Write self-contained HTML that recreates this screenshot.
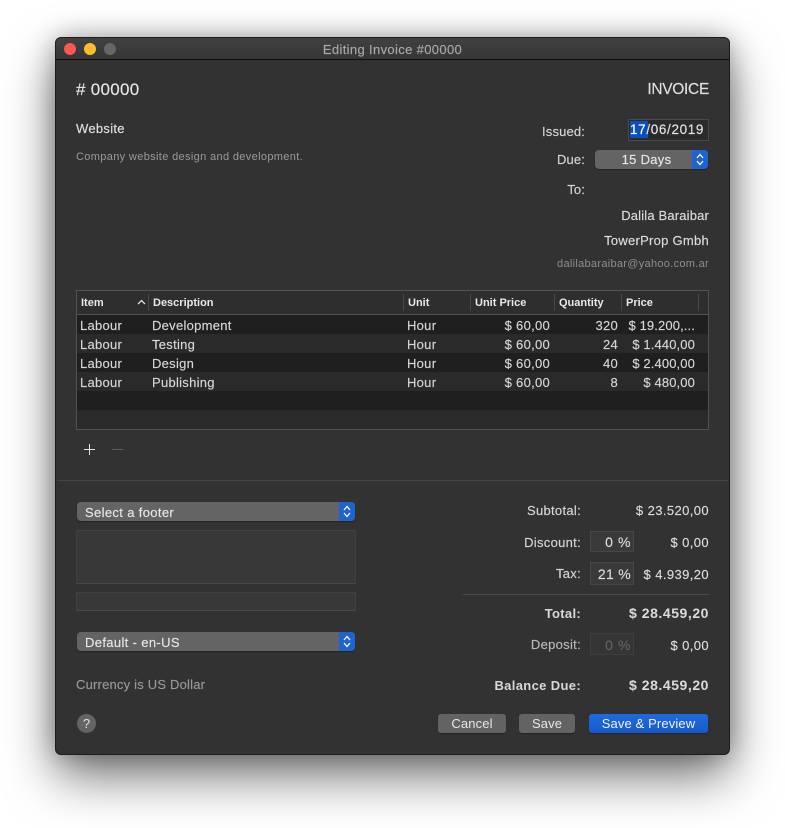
<!DOCTYPE html>
<html><head><meta charset="utf-8">
<style>
html,body{margin:0;padding:0;background:#fff;}
body{width:785px;height:828px;position:relative;overflow:hidden;font-family:"Liberation Sans",sans-serif;color:#dcdcdc;}
.win{position:absolute;left:56px;top:38px;width:673px;height:716px;box-sizing:border-box;background:#323232;border-radius:5px;
box-shadow:0 0 0 1px #1c1c1c,0 22px 50px rgba(0,0,0,.55),0 0 26px rgba(0,0,0,.3);}
.bar{position:absolute;left:56px;top:38px;width:673px;height:21px;background:linear-gradient(#414141,#363636);border-radius:5px 5px 0 0;border-bottom:1px solid #0e0e0e;}
.dot{position:absolute;width:12px;height:12px;border-radius:50%;top:43px;}
.t{position:absolute;white-space:nowrap;line-height:16px;font-size:13px;letter-spacing:.3px;-webkit-text-stroke:.15px;}
.r{text-align:right;}
.b{font-weight:bold;-webkit-text-stroke:0;}
.row{position:absolute;left:78px;width:630px;height:19px;}
.sep{position:absolute;width:1px;top:294px;height:17px;background:#484848;}
.h{position:absolute;top:295px;font-size:11px;font-weight:bold;line-height:16px;color:#e8e8e8;white-space:nowrap;}
.c{position:absolute;font-size:13px;line-height:19px;color:#d6d6d6;white-space:nowrap;letter-spacing:.28px;-webkit-text-stroke:.15px;}
.p{letter-spacing:.12px;}
.pop{position:absolute;height:19px;background:#646464;border-radius:4px;box-shadow:0 1px 1px rgba(0,0,0,.3);}
.arr{position:absolute;right:0;top:0;width:16px;height:19px;background:#1f62d0;border-radius:0 4px 4px 0;}
.arr svg{position:absolute;left:3px;top:3px;}
.field{position:absolute;box-sizing:border-box;background:#383838;border:1px solid #464646;}
.btn{position:absolute;top:714px;height:19px;border-radius:3px;background:#636363;font-size:13px;line-height:19px;text-align:center;color:#e6e6e6;box-shadow:0 1px 1px rgba(0,0,0,.3);letter-spacing:.12px;}
</style></head>
<body>
<div class="win"></div>
<div class="bar"></div>
<div class="dot" style="left:64px;background:#fc5753;"></div>
<div class="dot" style="left:84px;background:#fdbc2e;"></div>
<div class="dot" style="left:104px;background:#666;"></div>
<div class="t" style="left:56px;width:673px;text-align:center;top:42px;color:#a8a8a8;letter-spacing:.35px;">Editing Invoice #00000</div>

<div class="t" style="left:76px;top:81px;font-size:17px;line-height:18px;color:#e6e6e6;letter-spacing:.3px;">#&nbsp;00000</div>
<div class="t r" style="right:76px;top:81px;font-size:15.5px;line-height:18px;color:#e0e0e0;letter-spacing:-.3px;">INVOICE</div>
<div class="t" style="left:76px;top:121px;font-size:13px;color:#e0e0e0;letter-spacing:.3px;">Website</div>
<div class="t" style="left:76px;top:149px;font-size:11px;color:#9a9a9a;letter-spacing:.35px;-webkit-text-stroke:0;">Company website design and development.</div>

<div class="t r" style="right:200px;top:124px;color:#d6d6d6;letter-spacing:.15px;">Issued:</div>
<div style="position:absolute;left:628px;top:119px;width:81px;height:22px;box-sizing:border-box;background:#2b2b2b;border:1px solid #4a4a4a;"></div>
<div style="position:absolute;left:630px;top:121px;width:18px;height:17px;background:#0e4fc0;"></div>
<div class="t" style="left:630px;top:122px;color:#e2e2e2;font-size:13.5px;letter-spacing:.65px;"><span style="color:#fff">17</span>/06/2019</div>

<div class="t r" style="right:200px;top:152px;color:#d6d6d6;letter-spacing:.15px;">Due:</div>
<div class="pop" style="left:595px;top:150px;width:113px;">
  <div class="arr"><svg width="10" height="13" viewBox="0 0 10 13" fill="none" stroke="#fff" stroke-width="1.3"><path d="M2 5 5 1.5 8 5M2 8 5 11.5 8 8"/></svg></div>
</div>
<div class="t" style="left:595px;width:103px;text-align:center;top:152px;color:#e6e6e6;">15 Days</div>

<div class="t r" style="right:200px;top:182px;color:#d6d6d6;letter-spacing:.15px;">To:</div>
<div class="t r" style="right:76px;top:208px;color:#dcdcdc;letter-spacing:.17px;">Dalila Baraibar</div>
<div class="t r" style="right:76px;top:233px;color:#dcdcdc;letter-spacing:.27px;">TowerProp Gmbh</div>
<div class="t r" style="right:76px;top:256px;font-size:11px;color:#8e8e8e;letter-spacing:.3px;-webkit-text-stroke:0;">dalilabaraibar@yahoo.com.ar</div>

<!-- table -->
<div style="position:absolute;left:76px;top:290px;width:633px;height:140px;box-sizing:border-box;border:1px solid #525252;background:#2e2e2e;"></div>
<div style="position:absolute;left:77px;top:314px;width:631px;height:1px;background:#525252;"></div>
<div class="row" style="left:77px;width:631px;top:315px;background:#1f1f1f;"></div>
<div class="row" style="left:77px;width:631px;top:334px;background:#2a2a2a;"></div>
<div class="row" style="left:77px;width:631px;top:353px;background:#1f1f1f;"></div>
<div class="row" style="left:77px;width:631px;top:372px;background:#2a2a2a;"></div>
<div class="row" style="left:77px;width:631px;top:391px;background:#1f1f1f;"></div>
<div class="row" style="left:77px;width:631px;top:410px;background:#2a2a2a;"></div>

<div class="sep" style="left:148px"></div><div class="sep" style="left:403px"></div><div class="sep" style="left:470px"></div><div class="sep" style="left:554px"></div><div class="sep" style="left:621px"></div><div class="sep" style="left:698px"></div>
<div class="h" style="left:81px">Item</div>
<svg style="position:absolute;left:137px;top:299px" width="9" height="6" viewBox="0 0 9 6" fill="none" stroke="#e0e0e0" stroke-width="1.3"><path d="M1 5 4.5 1.5 8 5"/></svg>
<div class="h" style="left:153px">Description</div>
<div class="h" style="left:408px">Unit</div>
<div class="h" style="left:475px">Unit Price</div>
<div class="h" style="left:559px">Quantity</div>
<div class="h" style="left:626px">Price</div>

<div class="c" style="left:80px;top:316px">Labour</div><div class="c" style="left:152px;top:316px">Development</div><div class="c" style="left:407px;top:316px">Hour</div><div class="c r" style="right:235px;top:316px">$ 60,00</div><div class="c r" style="right:167px;top:316px">320</div><div class="c r p" style="right:90px;top:316px">$ 19.200,...</div>
<div class="c" style="left:80px;top:335px">Labour</div><div class="c" style="left:152px;top:335px">Testing</div><div class="c" style="left:407px;top:335px">Hour</div><div class="c r" style="right:235px;top:335px">$ 60,00</div><div class="c r" style="right:167px;top:335px">24</div><div class="c r p" style="right:90px;top:335px">$ 1.440,00</div>
<div class="c" style="left:80px;top:354px">Labour</div><div class="c" style="left:152px;top:354px">Design</div><div class="c" style="left:407px;top:354px">Hour</div><div class="c r" style="right:235px;top:354px">$ 60,00</div><div class="c r" style="right:167px;top:354px">40</div><div class="c r p" style="right:90px;top:354px">$ 2.400,00</div>
<div class="c" style="left:80px;top:373px">Labour</div><div class="c" style="left:152px;top:373px">Publishing</div><div class="c" style="left:407px;top:373px">Hour</div><div class="c r" style="right:235px;top:373px">$ 60,00</div><div class="c r" style="right:167px;top:373px">8</div><div class="c r p" style="right:90px;top:373px">$ 480,00</div>

<svg style="position:absolute;left:84px;top:444px" width="40" height="12" viewBox="0 0 40 12" fill="none"><path d="M5.5 0V11M0 5.5H11" stroke="#e4e4e4" stroke-width="1"/><path d="M28 5.5H39" stroke="#5c5c5c" stroke-width="1"/></svg>
<div style="position:absolute;left:57px;top:480px;width:671px;height:1px;background:#444;"></div>

<!-- left bottom -->
<div class="pop" style="left:77px;top:502px;width:278px;"><div class="arr"><svg width="10" height="13" viewBox="0 0 10 13" fill="none" stroke="#fff" stroke-width="1.3"><path d="M2 5 5 1.5 8 5M2 8 5 11.5 8 8"/></svg></div></div>
<div class="t" style="left:85px;top:505px;color:#e6e6e6;letter-spacing:.35px;">Select a footer</div>
<div class="field" style="left:76px;top:530px;width:280px;height:54px;border-color:#404040;border-bottom-color:#484848;"></div>
<div class="field" style="left:76px;top:592px;width:280px;height:19px;border-color:#404040;border-bottom-color:#484848;"></div>
<div class="pop" style="left:77px;top:632px;width:278px;"><div class="arr"><svg width="10" height="13" viewBox="0 0 10 13" fill="none" stroke="#fff" stroke-width="1.3"><path d="M2 5 5 1.5 8 5M2 8 5 11.5 8 8"/></svg></div></div>
<div class="t" style="left:85px;top:635px;color:#e6e6e6;letter-spacing:.35px;">Default - en-US</div>
<div class="t" style="left:76px;top:677px;color:#989898;letter-spacing:.2px;">Currency is US Dollar</div>
<div style="position:absolute;left:77px;top:714px;width:19px;height:19px;border-radius:50%;background:#646464;color:#e0e0e0;font-size:13px;line-height:19px;text-align:center;">?</div>

<!-- totals -->
<div class="t r" style="right:204px;top:503px;color:#d6d6d6;">Subtotal:</div>
<div class="t r" style="right:76px;top:503px;color:#dcdcdc;letter-spacing:.4px;">$ 23.520,00</div>
<div class="t r" style="right:204px;top:535px;color:#d6d6d6;">Discount:</div>
<div class="field" style="left:590px;top:531px;width:44px;height:21px;background:#3a3a3a;"></div>
<div class="t r" style="right:154px;top:534px;color:#dcdcdc;font-size:14px;letter-spacing:.6px;">0 %</div>
<div class="t r" style="right:76px;top:535px;color:#dcdcdc;letter-spacing:.4px;">$ 0,00</div>
<div class="t r" style="right:204px;top:566px;color:#d6d6d6;">Tax:</div>
<div class="field" style="left:590px;top:562px;width:44px;height:23px;background:#3a3a3a;"></div>
<div class="t r" style="right:154px;top:566px;color:#dcdcdc;font-size:14px;">21 %</div>
<div class="t r" style="right:76px;top:567px;color:#dcdcdc;letter-spacing:.4px;">$ 4.939,20</div>
<div style="position:absolute;left:463px;top:594px;width:246px;height:1px;background:#4a4a4a;"></div>
<div class="t r b" style="right:204px;top:606px;color:#d8d8d8;letter-spacing:.3px;">Total:</div>
<div class="t r b" style="right:76px;top:605px;color:#dcdcdc;font-size:14px;letter-spacing:.55px;">$ 28.459,20</div>
<div class="t r" style="right:204px;top:637px;color:#b8b8b8;">Deposit:</div>
<div class="field" style="left:590px;top:633px;width:44px;height:22px;background:#353535;border-color:#3e3e3e;"></div>
<div class="t r" style="right:154px;top:637px;color:#626262;font-size:14px;letter-spacing:.6px;">0 %</div>
<div class="t r" style="right:76px;top:638px;color:#dcdcdc;letter-spacing:.4px;">$ 0,00</div>
<div class="t r b" style="right:204px;top:678px;color:#d8d8d8;letter-spacing:.35px;">Balance Due:</div>
<div class="t r b" style="right:76px;top:677px;color:#dcdcdc;font-size:14px;letter-spacing:.55px;">$ 28.459,20</div>

<div class="btn" style="left:438px;width:68px;">Cancel</div>
<div class="btn" style="left:519px;width:56px;">Save</div>
<div class="btn" style="left:589px;width:119px;background:linear-gradient(#1d6be0,#175bc8);color:#f2f2f2;">Save &amp; Preview</div>
</body></html>
